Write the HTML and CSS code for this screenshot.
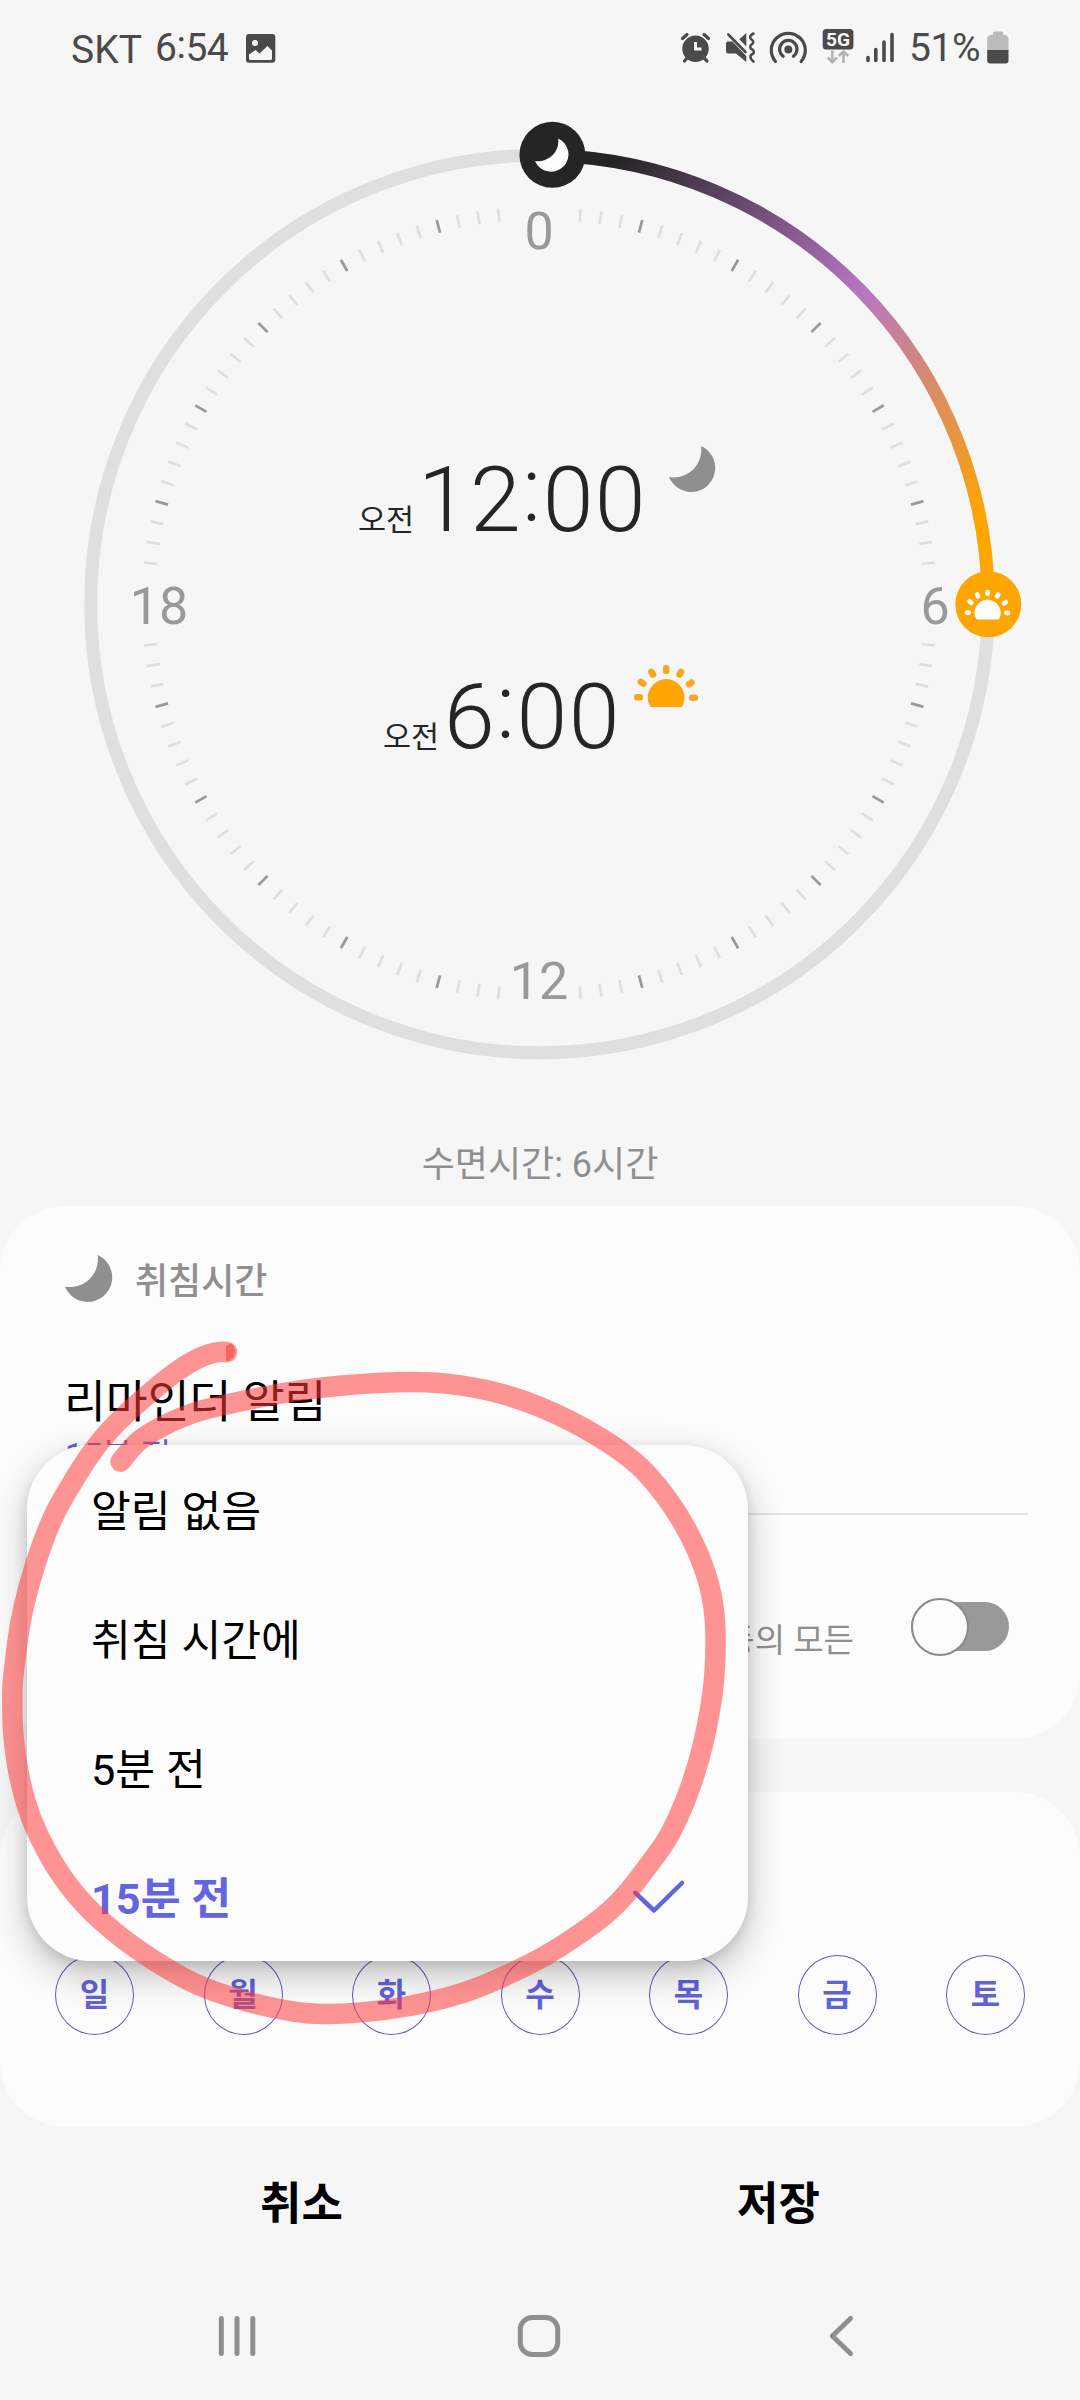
FILE: index.html
```html
<!DOCTYPE html>
<html lang="ko">
<head>
<meta charset="utf-8">
<title>수면시간</title>
<link rel="stylesheet" href="styles.css">
</head>
<body>
<svg class="defs" width="0" height="0" aria-hidden="true">
  <symbol id="moon" viewBox="0 0 47 47"><path d="M32 0A27.500 27.500 0 0 1 0 31A24 24 0 1 0 32 0Z"/></symbol>
  <symbol id="sunrise" viewBox="0 0 64 42">
    <path d="M17.200 42Q14.200 38 14.200 32.500A17.900 17.900 0 0 1 50 32.500Q50 38 47.400 42Z"/>
    <path class="rays" d="M3.300 32.300H5.800M6.900 16.900L9.300 18.600M17.400 6.900L18.900 9.500M32.200 3.300V6M47 6.900L45.500 9.500M57.500 17.600L55.100 19.300M58.300 32.700H60.900"/>
  </symbol>
</svg>

<header class="status">
  <span class="carrier">SKT</span>
  <span class="clock">6<span class="colon">:</span>54</span>
  <svg class="photo" width="30" height="30" viewBox="246 34 30 30"><path class="ink" fill-rule="evenodd" d="M249 34H272.500Q275.300 34 275.300 37V59.700Q275.300 62.700 272.500 62.700H249Q246 62.700 246 59.700V37Q246 34 249 34ZM255 40A3 3 0 1 0 255 46A3 3 0 1 0 255 40ZM249 54.500V58.500Q249 60 250.500 60H270.500Q272 60 272 58.500V50.500L267.500 46L259.500 53.500L255.500 50Z"/></svg>
  <div class="indicators">
    <svg width="44" height="36" viewBox="680 30 44 36">
      <path class="ink" d="M695.500 35.500A13.200 13.200 0 1 0 695.500 62A13.200 13.200 0 1 0 695.500 35.500Z"/>
      <path class="line w3" d="M682.500 38.500L687 34.500M708.500 38.500L704 34.500M684.500 61L688 57M707 61L703 57"/>
      <path class="hole" d="M695.500 42V49H701.500"/>
    </svg>
    <svg width="44" height="36" viewBox="724 30 44 36">
      <path class="ink" d="M739.300 39.300L746.300 33V46.500ZM728 41.500H732.500L746.300 56V62L736 53.500H728Q726 53.500 726 51.500V43.500Q726 41.500 728 41.500Z"/>
      <path class="line w25" d="M728.300 34.500L745.500 52M753.500 33.500Q748.500 36 751 39Q755.500 42 751 45Q748.500 48 753 50Q755.500 53 751 55Q749 58 753.500 61.500"/>
    </svg>
    <svg width="52" height="36" viewBox="768 30 52 36">
      <circle class="ink" cx="788.300" cy="49.500" r="4"/>
      <path class="line w3" d="M783.200 56.200A8.700 8.700 0 1 1 793.400 56.200M775.500 61.500A17 17 0 1 1 801.100 61.500"/>
    </svg>
    <svg width="46" height="38" viewBox="820 28 46 38">
      <rect class="ink" x="822.700" y="29" width="30.700" height="20.400" rx="3.500"/>
      <text class="net" x="838" y="46" text-anchor="middle" textLength="24" lengthAdjust="spacingAndGlyphs">5G</text>
      <path class="faint" d="M832.300 50.500V62M827.700 57.500L832.300 62L837 57.500M843.500 63V51.500M838.800 56L843.500 51.500L848.200 56"/>
    </svg>
    <svg width="43" height="36" viewBox="866 30 43 36"><path class="line w35" d="M868 57.500V60.500M875.800 49.500V60.500M884 42V60.500M892 34.500V60.500"/></svg>
    <span class="percent">51%</span>
    <svg width="22" height="36" viewBox="986.500 30 22 36">
      <path fill="#bababa" d="M992.500 35V33Q992.500 31.500 994 31.500H1001Q1002.500 31.500 1002.500 33V35H1004.500Q1008 35.500 1008 39V51H986.700V39Q986.700 35.500 990 35Z"/>
      <path class="ink" d="M986.700 50H1008V60.500Q1008 63.500 1005 63.500H989.700Q986.700 63.500 986.700 60.500Z"/>
    </svg>
  </div>
</header>

<main>
  <section class="dial">
    <svg class="face" width="1080" height="1050" viewBox="0 80 1080 1050">
      <defs>
        <linearGradient id="sleep" gradientUnits="userSpaceOnUse" x1="539.500" y1="155.200" x2="988.300" y2="604">
          <stop offset=".09" stop-color="#252525"/>
          <stop offset=".51" stop-color="#b875c5"/>
          <stop offset=".9" stop-color="#ffa500"/>
        </linearGradient>
      </defs>
      <circle class="ring" cx="539.500" cy="604" r="448.800"/>
      <path class="arc" d="M552 155.400A448.800 448.800 0 0 1 988.300 604"/>
      <circle class="tick minor" cx="539.500" cy="604" r="391" pathLength="360"/>
      <circle class="tick major" cx="539.500" cy="604" r="391" pathLength="360"/>
      <g class="hours">
        <text x="539" y="249">0</text>
        <text x="935" y="624">6</text>
        <text x="539" y="998.500">12</text>
        <text x="159" y="624">18</text>
      </g>
      <circle cx="552.400" cy="154.800" r="33" fill="#252525"/>
      <use href="#moon" x="535" y="138.500" width="34" height="34" fill="#fcfcfc"/>
      <circle cx="988.300" cy="604.300" r="33" fill="#ffa500"/>
      <use href="#sunrise" x="964.500" y="589.500" width="46" height="30" fill="#fcfcfc" stroke="#fcfcfc"/>
    </svg>
    <div class="times">
      <div class="time bed">
        <span class="ampm">오전</span><span class="digits">12<span class="colon">:</span>00</span>
        <svg class="moon" width="47" height="47"><use href="#moon"/></svg>
      </div>
      <div class="time wake">
        <span class="ampm">오전</span><span class="digits">6<span class="colon">:</span>00</span>
        <svg class="sun" width="64" height="42"><use href="#sunrise"/></svg>
      </div>
    </div>
  </section>
  <p class="summary">수면시간: 6시간</p>

  <section class="card bedtime">
    <h2><svg class="moon" width="48" height="48"><use href="#moon"/></svg><span>취침시간</span></h2>
    <div class="reminder">
      <div class="label">리마인더 알림</div>
      <div class="value">15분 전</div>
    </div>
    <div class="mode">
      <span class="hint">등의 모든</span>
      <span class="switch"><span class="knob"></span></span>
    </div>
  </section>

  <section class="card repeat">
    <ul class="days"><li>일</li><li>월</li><li>화</li><li>수</li><li>목</li><li>금</li><li>토</li></ul>
  </section>
</main>

<footer>
  <div class="actions"><button>취소</button><button>저장</button></div>
  <nav class="nav">
    <svg width="64" height="60" viewBox="205 2306 64 60"><path d="M221.300 2318.500V2353.500M237 2318.500V2353.500M252.800 2318.500V2353.500"/></svg>
    <svg width="64" height="60" viewBox="507 2306 64 60"><rect x="520.300" y="2317.500" width="37.400" height="37" rx="12"/></svg>
    <svg width="64" height="60" viewBox="809 2306 64 60"><path d="M850.500 2318.500L832.300 2336L850.500 2353.500"/></svg>
  </nav>
</footer>

<ul class="menu">
  <li>알림 없음</li>
  <li>취침 시간에</li>
  <li>5분 전</li>
  <li class="selected">15분 전
    <svg width="54" height="36" viewBox="632 1876.500 54 36"><path d="M635.400 1892.300L654 1910L682 1882.500"/></svg>
  </li>
</ul>

<svg class="marker" width="1080" height="2400" viewBox="0 0 1080 2400">
  <path d="M227 1352C197 1349 157 1386 127 1413S80 1469 62 1500S23 1595 17 1645S12.400 1683 12.400 1713S19 1790 34 1825S67 1888 93 1913S151 1960 182 1977S280 2014 325 2014S438 2005 489 1983S560 1948 592 1925S637 1880 657 1854S695 1780 704 1740S715.600 1674 715.600 1640S710 1581 698 1553S669 1498 647 1474S579 1423 540 1407S456 1382 413 1382S311 1387 262 1397S195 1410 165 1425S133 1447 120.500 1461.700"/>
  <path class="tip" d="M226 1345.500L231 1343.500A10 10 0 0 1 228 1361L226 1361Z"/>
</svg>
</body>
</html>
```
FILE: styles.css
```css
* { box-sizing: border-box; margin: 0; padding: 0; }
body {
  position: relative;
  width: 1080px;
  height: 2400px;
  overflow: hidden;
  background: #f6f6f6;
  color: #000;
  font-family: Roboto, "Noto Sans CJK KR", sans-serif;
}
ul { list-style: none; }
svg { display: block; flex: none; overflow: visible; }
.defs { position: absolute; }
.moon { fill: #8f8f8f; }
.rays { fill: none; stroke-width: 6.600; stroke-linecap: round; }

/* status bar */
.status {
  display: flex;
  height: 80px;
  padding: 0 71.500px 0 71px;
  color: #4a4a4a;
  font-size: 39px;
  line-height: 46px;
}
.carrier { padding-top: 27px; width: 84px; }
.clock { padding-top: 25px; width: 91px; letter-spacing: -.5px; }
.clock .colon { vertical-align: 3px; line-height: 0; }
.photo { margin-top: 34px; }
.indicators { display: flex; margin-left: auto; }
.indicators svg { margin-top: 30px; }
.indicators svg:nth-child(4) { margin-top: 28px; }
.percent { width: 77.500px; padding-top: 25px; letter-spacing: -.4px; }
.ink { fill: #4a4a4a; }
.line { fill: none; stroke: #4a4a4a; stroke-linecap: round; }
.w25 { stroke-width: 2.600; }
.w3 { stroke-width: 3.200; }
.w35 { stroke-width: 3.600; }
.hole { fill: none; stroke: #f6f6f6; stroke-width: 3; }
.faint { fill: none; stroke: #b3b3b3; stroke-width: 2.700; }
.net { fill: #f6f6f6; font-size: 19px; font-weight: 700; }

/* sleep dial */
.dial { display: grid; height: 1050px; }
.face, .times { grid-area: 1 / 1; }
.ring { fill: none; stroke: #dfdfdf; stroke-width: 13; }
.arc { fill: none; stroke: url(#sleep); stroke-width: 13; }
.tick { fill: none; stroke-width: 13; }
.minor {
  stroke: #dfdfdf;
  stroke-dasharray: 0 5.800 .4 2.600 .4 2.600 .4 5.600 .4 2.600 .4 2.600 .4 2.600 .4 5.600 .4 2.600 .4 2.600 .4 2.600 .4 5.600 .4 2.600 .4 2.600 .4 2.600 .4 5.600 .4 2.600 .4 2.600 .4 2.600 .4 5.600 .4 2.600 .4 2.600 .4 5.800;
}
.major { stroke: #999; stroke-dasharray: 0 14.800 .4 14.600 .4 14.600 .4 14.600 .4 14.600 .4 14.800; }
.hours { fill: #999; font-size: 52px; text-anchor: middle; }
.times { padding-top: 366px; color: #252525; }
.time { display: flex; align-items: baseline; height: 217px; }
.bed { padding-left: 358px; }
.wake { padding-left: 383px; }
.ampm { width: 60px; font-size: 30.500px; line-height: 1; white-space: nowrap; }
.wake .ampm { width: 61px; }
.digits { font-size: 91.500px; font-weight: 300; line-height: 108px; letter-spacing: 1.300px; }
.digits .colon { vertical-align: 10px; line-height: 0; }
.bed .moon { align-self: flex-start; margin-left: 22px; }
.wake .sun { align-self: flex-start; margin: 2px 0 0 13px; fill: #ffa500; stroke: #f9a61f; }

.summary { height: 76px; padding-top: 8px; color: #8f8f8f; font-size: 36px; line-height: 54px; text-align: center; }

/* cards */
.card { background: #fcfcfc; border-radius: 66px; }
.bedtime { height: 533px; padding: 49px 52px 0 65px; }
.bedtime h2 { display: flex; align-items: center; gap: 22px; height: 48px; color: #8f8f8f; font-size: 36px; font-weight: 500; }
.bedtime h2 span { padding-bottom: 3px; }
.reminder { height: 212px; margin: 0 0 0 -12px; padding: 67px 0 0 11px; border-bottom: 2.500px solid #e4e4e4; }
.label { height: 63px; font-size: 45.500px; line-height: 66px; }
.value { padding-left: 1px; color: #6262d4; font-size: 33px; line-height: 46px; }
.mode { display: flex; align-items: flex-start; justify-content: flex-end; padding: 83px 19px 0 0; }
.hint { margin: 19px 57px 0 0; color: #8f8f8f; font-size: 33px; line-height: 48px; }
.switch { display: flex; align-items: center; width: 98px; height: 49px; margin-top: 4px; background: #999; border-radius: 25px; }
.knob { flex: none; width: 58px; height: 58px; background: #fcfcfc; border: 2.500px solid #8a8a8a; border-radius: 50%; }
.repeat { height: 335px; margin-top: 53px; padding: 163px 55px 0 55px; }
.days { display: flex; justify-content: space-between; }
.days li { width: 79px; height: 80px; border: 1px solid #5c5cc4; border-radius: 50%; color: #6262d8; font-size: 32px; font-weight: 700; line-height: 78px; text-align: center; }

/* bottom buttons */
.actions { display: flex; justify-content: center; height: 148px; }
.actions button { width: 477px; height: 148px; padding-top: 7px; border: 0; background: none; color: #000; font: 700 45px/1 Roboto, "Noto Sans CJK KR", sans-serif; }
.nav { display: flex; justify-content: space-between; padding: 31px 207px 0 205px; fill: none; stroke: #8f8f8f; stroke-width: 5; stroke-linecap: round; stroke-linejoin: round; }

/* reminder popup */
.menu { position: absolute; left: 27px; top: 1445px; width: 721px; height: 516px; background: #fcfcfc; border-radius: 64px; box-shadow: 0 14px 36px rgba(0, 0, 0, .24), 0 4px 12px rgba(0, 0, 0, .1); }
.menu li { display: flex; align-items: center; justify-content: space-between; height: 129px; padding: 0 62px 3px 64px; font-size: 43.300px; }
.menu .selected { color: #6464e0; font-weight: 700; }
.selected path { fill: none; stroke: #6464dc; stroke-width: 4.500; stroke-linecap: round; stroke-linejoin: round; }

/* hand-drawn marker */
.marker { position: absolute; left: 0; top: 0; fill: none; stroke: rgba(255, 58, 58, .54); stroke-width: 20.500; stroke-linecap: round; stroke-linejoin: round; }
.marker .tip { fill: rgba(255, 58, 58, .54); stroke: none; }
```
